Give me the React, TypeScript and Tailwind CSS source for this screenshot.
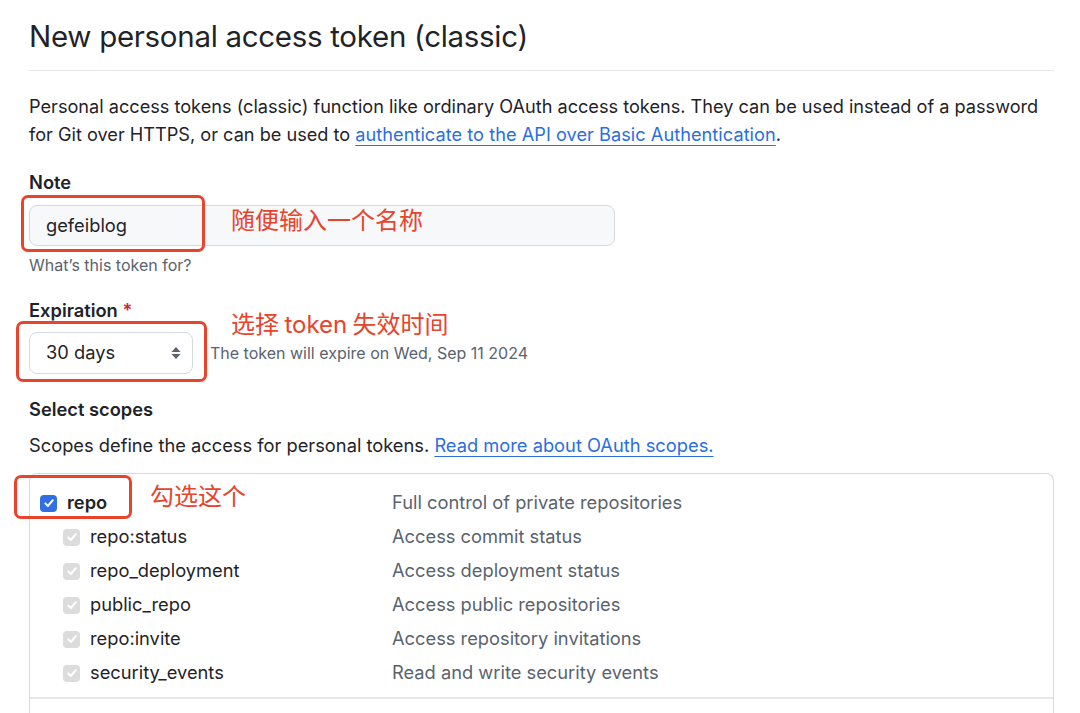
import React from "react";

const FONT = { fontFamily: 'Inter, "Noto Sans", "Noto Sans CJK SC", sans-serif' };
const CJK = { fontFamily: '"Noto Sans CJK SC", "Noto Sans", sans-serif' };

function Check({ disabled }: { disabled?: boolean }) {
  return (
    <span
      className={
        "flex h-[17px] w-[17px] shrink-0 items-center justify-center rounded-[4px] " +
        (disabled ? "bg-[#dcdcdc]" : "bg-[#2f6fe3]")
      }
    >
      <svg width="12" height="12" viewBox="0 0 12 12" fill="none">
        <path d="M2.3 6.4 L4.9 9 L9.8 3.2" stroke="white" strokeWidth="2" strokeLinecap="round" strokeLinejoin="round" />
      </svg>
    </span>
  );
}

const subs: [string, string][] = [
  ["repo:status", "Access commit status"],
  ["repo_deployment", "Access deployment status"],
  ["public_repo", "Access public repositories"],
  ["repo:invite", "Access repository invitations"],
  ["security_events", "Read and write security events"],
];

export default function App() {
  return (
    <div className="h-[713px] w-[1080px] overflow-hidden bg-white text-[#1f2328]" style={FONT}>
      <div className="ml-[29px] w-[1025px] pt-[16px]">
        <h1 className="border-b border-[#e5e8eb] pb-[14px] text-[29.5px] font-normal leading-[40px] tracking-[-0.3px]">
          New personal access token (classic)
        </h1>
        <div className="mt-[21px] text-[18.15px] leading-[28px]">
          <div>Personal access tokens (classic) function like ordinary OAuth access tokens. They can be used instead of a password</div>
          <div>
            <span>for Git over HTTPS, or can be used to </span>
            <a className="text-[#2a6ee0] underline decoration-1 underline-offset-[4px] tracking-[0.05px]">authenticate to the API over Basic Authentication</a>
            <span>.</span>
          </div>
        </div>

        <div className="mt-[20px] text-[18.3px] font-semibold leading-[28px]">Note</div>
        <div className="relative mt-[9px] h-[41px] w-[586px] rounded-[8px] border border-[#d5dae0] bg-[#f6f8fa]">
          <div className="flex h-full items-center pl-[16px] text-[18.3px]">gefeiblog</div>
          <div className="absolute left-[-9px] top-[-11px] h-[57px] w-[184px] rounded-[7px] border-[3px] border-[#e8432b]" />
          <div className="absolute left-[201px] top-[-3px] text-[24px] leading-[32px] text-[#e8432b]" style={CJK}>
            随便输入一个名称
          </div>
        </div>
        <div className="mt-[7px] text-[16px] leading-[24px] text-[#59636e]">What’s this token for?</div>

        <div className="mt-[19px] text-[18.3px] font-semibold leading-[28px]">
          Expiration <span className="text-[#cf222e]">*</span>
        </div>
        <div className="relative mt-[8px] flex items-center gap-[17px]">
          <div className="flex h-[42px] w-[164px] items-center justify-between rounded-[8px] border border-[#d5dae0] bg-white pl-[16px] pr-[10px] text-[18.3px]">
            <span>30 days</span>
            <svg width="12" height="16" viewBox="0 0 12 16">
              <path d="M6 2 L10.5 7 L1.5 7 Z" fill="#59636e" />
              <path d="M6 14 L10.5 9 L1.5 9 Z" fill="#59636e" />
            </svg>
          </div>
          <span className="text-[16px] leading-[24px] text-[#59636e]">The token will expire on Wed, Sep 11 2024</span>
          <div className="absolute left-[-13px] top-[-11px] h-[61px] w-[191px] rounded-[7px] border-[3px] border-[#e8432b]" />
          <div className="absolute left-[202px] top-[-25px] text-[24px] leading-[32px] text-[#e8432b]" style={CJK}>
            选择 <span style={FONT}>token</span> 失效时间
          </div>
        </div>

        <div className="mt-[21px] text-[18.3px] font-semibold leading-[28px]">Select scopes</div>
        <p className="mt-[8px] text-[18.3px] leading-[28px]">
          <span>Scopes define the access for personal tokens. </span>
          <a className="text-[#2a6ee0] underline decoration-1 underline-offset-[4px]">Read more about OAuth scopes.</a>
        </p>

        <div className="mt-[14px] rounded-t-[8px] border border-b-0 border-[#d5dae0] pt-[12px]">
          <div className="relative flex h-[34px] items-center text-[18.3px]">
            <div className="flex w-[362px] items-center gap-[10px] pl-[10px]">
              <Check />
              <span className="font-semibold">repo</span>
            </div>
            <span className="text-[#59636e]">Full control of private repositories</span>
            <div className="absolute left-[-16px] top-[-11px] h-[44px] w-[118px] rounded-[7px] border-[3px] border-[#e8432b]" />
            <div className="absolute left-[120px] top-[-7px] text-[24px] leading-[32px] text-[#e8432b]" style={CJK}>
              勾选这个
            </div>
          </div>
          {subs.map(([n, d]) => (
            <div key={n} className="flex h-[34px] items-center text-[18.3px]">
              <div className="flex w-[362px] items-center gap-[10px] pl-[33px]">
                <Check disabled />
                <span>{n}</span>
              </div>
              <span className="text-[#59636e]">{d}</span>
            </div>
          ))}
          <div className="mt-[7px] h-[30px] border-t-2 border-[#e5e8eb]" />
        </div>
      </div>
    </div>
  );
}
